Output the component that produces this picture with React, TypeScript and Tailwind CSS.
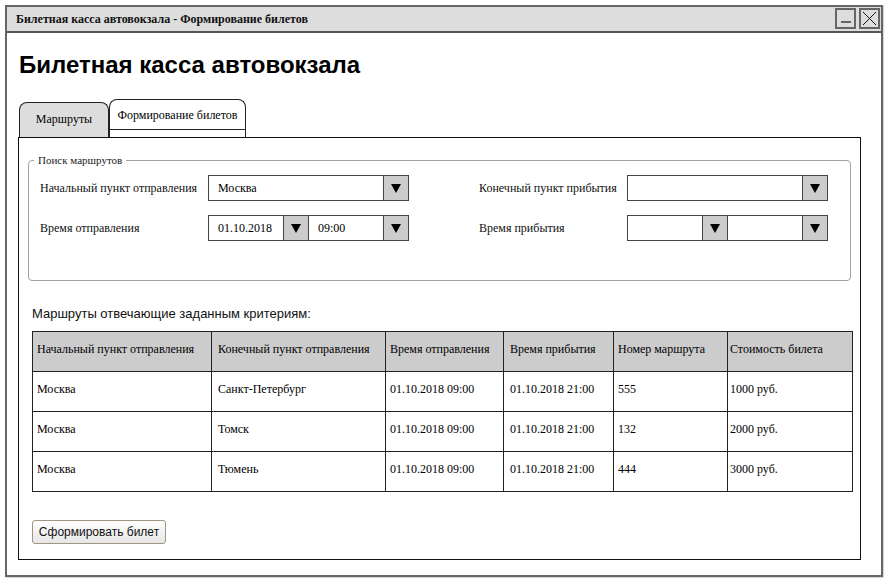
import React from "react";

const serif = "font-['Liberation_Serif',serif]";
const sans = "font-['Liberation_Sans',Arial,sans-serif]";

function Arrow() {
  return (
    <div className="w-[25px] h-full shrink-0 bg-[#cccccc] border-l border-[#444] flex items-center justify-center">
      <svg width="10" height="9" viewBox="0 0 10 9">
        <path d="M0 0 L10 0 L5 9 Z" fill="#000" />
      </svg>
    </div>
  );
}

function Combo({ value = "", width }: { value?: string; width: string }) {
  return (
    <div className={`${width} h-[26px] border border-[#444] flex items-stretch bg-white`}>
      <div className={`flex-1 flex items-center pl-[9px] text-[12px] text-black ${serif}`}>{value}</div>
      <Arrow />
    </div>
  );
}

function FieldRow({ label, labelWidth, children }: { label: string; labelWidth: string; children: React.ReactNode }) {
  return (
    <div className="flex items-center h-[26px]">
      <div className={`${labelWidth} shrink-0 text-[12px] text-[#111] ${serif}`}>{label}</div>
      {children}
    </div>
  );
}

const cols = ["w-[179px]", "w-[174px]", "w-[118px]", "w-[110px]", "w-[114px]", "w-[125px]"];
const pads = ["pl-[4px]", "pl-[6px]", "pl-[4px]", "pl-[6px]", "pl-[4px]", "pl-[2px]"];

const header = [
  "Начальный пункт отправления",
  "Конечный пункт отправления",
  "Время отправления",
  "Время прибытия",
  "Номер маршрута",
  "Стоимость билета",
];

const rows = [
  ["Москва", "Санкт-Петербург", "01.10.2018 09:00", "01.10.2018 21:00", "555", "1000 руб."],
  ["Москва", "Томск", "01.10.2018 09:00", "01.10.2018 21:00", "132", "2000 руб."],
  ["Москва", "Тюмень", "01.10.2018 09:00", "01.10.2018 21:00", "444", "3000 руб."],
];

function Row({ cells, head }: { cells: string[]; head?: boolean }) {
  return (
    <div className={`flex h-[40px] border-b border-[#222] ${head ? "bg-[#cccccc]" : "bg-white"}`}>
      {cells.map((c, i) => (
        <div
          key={i}
          className={`${cols[i]} ${pads[i]} shrink-0 border-r border-[#222] flex items-center pb-[6px] text-[12px] text-black ${serif}`}
        >
          {c}
        </div>
      ))}
    </div>
  );
}

export default function App() {
  return (
    <div className="w-[886px] h-[582px] bg-white p-[5px]">
      <div className="w-[878px] h-[572px] border-2 border-[#666] flex flex-col shadow-[1px_1px_1px_rgba(0,0,0,0.15)]">
        {/* title bar */}
        <div className="h-[26px] shrink-0 bg-[#dddddd] border-b-2 border-[#555] flex items-center pl-[9px] pr-[1px]">
          <div className={`flex-1 text-[12px] font-bold text-[#111] ${serif}`}>
            Билетная касса автовокзала - Формирование билетов
          </div>
          <div className="flex gap-[3px] pb-[1px]">
            <div className="w-[21px] h-[21px] border-2 border-[#666] bg-[#dddddd] flex items-end justify-center pb-[4px]">
              <div className="w-[10px] h-[2px] bg-[#666]" />
            </div>
            <div className="w-[21px] h-[21px] border-2 border-[#666] bg-[#dddddd] flex items-center justify-center">
              <svg width="15" height="15" viewBox="0 0 15 15">
                <path d="M1 1 L14 14 M14 1 L1 14" stroke="#111" strokeWidth="1" />
              </svg>
            </div>
          </div>
        </div>

        {/* body */}
        <div className="flex-1 flex flex-col pl-[11px]">
          <h1 className={`mt-[18px] ml-[1px] text-[24px] leading-[28px] font-bold text-black ${sans}`}>
            Билетная касса автовокзала
          </h1>

          {/* tabs */}
          <div className="mt-[20px] ml-[1px] flex items-end h-[38px]">
            <div className="w-[90px] h-[35px] bg-[#dddddd] border border-b-0 border-[#222] rounded-t-[8px] flex items-center justify-center pb-[3px]">
              <span className={`text-[12px] text-black ${serif}`}>Маршруты</span>
            </div>
            <div className="w-[137px] h-[38px] bg-white border border-b-0 border-[#222] rounded-t-[8px] flex flex-col">
              <div className={`h-[30px] border-b border-[#222] flex items-center justify-center text-[12px] text-black ${serif}`}>
                Формирование билетов
              </div>
            </div>
          </div>

          {/* panel */}
          <div className="w-[843px] border border-[#111] flex flex-col px-[9px] pb-[15px]">
            <fieldset className="mt-[16px] border border-[#a3a39b] rounded-[4px] pb-[39px] pt-[8px]">
              <legend className={`ml-[5px] px-[4px] text-[11px] leading-[13px] text-[#222] ${serif}`}>
                Поиск маршрутов
              </legend>
              <div className="grid grid-cols-[439px_1fr] pl-[11px]">
                <div className="flex flex-col gap-[14px]">
                  <FieldRow label="Начальный пункт отправления" labelWidth="w-[168px]">
                    <Combo value="Москва" width="w-[201px]" />
                  </FieldRow>
                  <FieldRow label="Время отправления" labelWidth="w-[168px]">
                    <Combo value="01.10.2018" width="w-[101px]" />
                    <div className="-ml-px">
                      <Combo value="09:00" width="w-[101px]" />
                    </div>
                  </FieldRow>
                </div>
                <div className="flex flex-col gap-[14px]">
                  <FieldRow label="Конечный пункт прибытия" labelWidth="w-[148px]">
                    <Combo width="w-[201px]" />
                  </FieldRow>
                  <FieldRow label="Время прибытия" labelWidth="w-[148px]">
                    <Combo width="w-[101px]" />
                    <div className="-ml-px">
                      <Combo width="w-[101px]" />
                    </div>
                  </FieldRow>
                </div>
              </div>
            </fieldset>

            <div className={`mt-[25px] ml-[4px] text-[13px] leading-[16px] text-[#111] ${sans}`}>
              Маршруты отвечающие заданным критериям:
            </div>

            <div className="mt-[9px] ml-[4px] w-[821px] border-l border-t border-[#222]">
              <Row cells={header} head />
              {rows.map((r, i) => (
                <Row key={i} cells={r} />
              ))}
            </div>

            <div className="mt-[26px] ml-[4px]">
              <button
                className={`h-[24px] w-[134px] rounded-[3px] border border-[#a09482] bg-gradient-to-b from-white to-[#e6e6e6] text-[12px] text-[#111] ${sans}`}
              >
                Сформировать билет
              </button>
            </div>
          </div>
        </div>
      </div>
    </div>
  );
}
